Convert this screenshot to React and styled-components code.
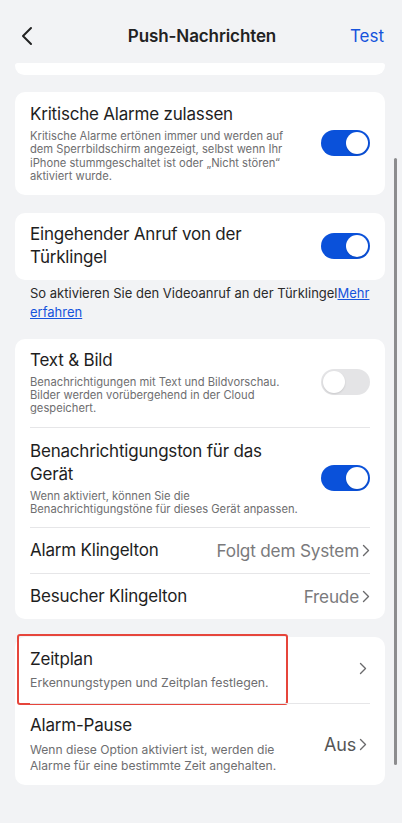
import React from 'react';
import styled, { createGlobalStyle } from 'styled-components';

const GlobalStyle = createGlobalStyle`
  html, body {
    margin: 0;
    padding: 0;
    background: #f2f3f5;
  }
  body {
    font-family: Inter, "Noto Sans", "Liberation Sans", sans-serif;
    -webkit-font-smoothing: antialiased;
  }
`;

const Page = styled.div`
  position: relative;
  width: 402px;
  min-height: 823px;
  background: #f2f3f5;
  overflow: hidden;
`;

const Header = styled.div`
  display: grid;
  grid-template-columns: 1fr auto 1fr;
  align-items: center;
  height: 55px;
  padding: 8px 18px 0 20px;
`;

const BackButton = styled.div`
  display: flex;
  align-items: center;
  color: #222;
`;

const Title = styled.div`
  font-size: 17px;
  font-weight: 600;
  color: #222;
  letter-spacing: -0.1px;
`;

const HeaderAction = styled.div`
  justify-self: end;
  font-size: 17px;
  color: #1553dc;
`;

const Content = styled.div`
  display: flex;
  flex-direction: column;
  padding: 0 17px 0 15px;
`;

const CardStub = styled.div`
  height: 12px;
  background: #fff;
  border-radius: 3px 3px 10px 10px;
  margin-bottom: 17px;
`;

const Card = styled.div`
  background: #fff;
  border-radius: 10px;
  padding: 0 15px;
  margin-bottom: ${p => p.$mb ?? 18}px;
`;

const Row = styled.div`
  position: relative;
  display: flex;
  align-items: center;
  gap: 12px;
  padding: ${p => p.$pad || '11px 0'};
  min-height: ${p => p.$min || 0}px;
  box-sizing: border-box;
  border-top: ${p => (p.$divider ? '1px solid #e6e6e8' : 'none')};
`;

const RowText = styled.div`
  flex: 1;
  min-width: 0;
`;

const RowTitle = styled.div`
  font-size: 17px;
  line-height: 23px;
  color: #1e1e1e;
  letter-spacing: -0.2px;
`;

const RowDesc = styled.div`
  margin-top: ${p => p.$gap ?? 4}px;
  font-size: ${p => p.$size || 11.2}px;
  line-height: ${p => p.$lh || 13.4}px;
  color: #6e6e70;
  max-width: ${p => p.$maxw || 264}px;
`;

const Value = styled.div`
  display: flex;
  align-items: center;
  gap: 3px;
  font-size: ${p => p.$big ? 18 : 17.2}px;
  color: ${p => p.$big ? '#555' : '#7a7a7c'};
  letter-spacing: -0.2px;
  white-space: nowrap;
`;

const Track = styled.div`
  flex: none;
  width: 49px;
  height: 26px;
  border-radius: 13px;
  background: ${p => (p.$on ? '#0a51da' : '#e4e4e6')};
  display: flex;
  align-items: center;
  justify-content: ${p => (p.$on ? 'flex-end' : 'flex-start')};
  padding: 0 2px;
  box-sizing: border-box;
`;

const Knob = styled.div`
  width: 22px;
  height: 22px;
  border-radius: 50%;
  background: #fff;
  box-shadow: 0 1px 2px rgba(0, 0, 0, 0.12);
`;

const Note = styled.div`
  padding: 4px 0 0 15px;
  margin-bottom: 17px;
  font-size: 13px;
  line-height: 19px;
  color: #2a2a2a;
`;

const NoteLink = styled.a`
  color: #1553dc;
  text-decoration: underline;
`;

const Highlight = styled.div`
  position: absolute;
  left: -13px;
  top: -3px;
  width: 271px;
  height: 71px;
  border: 2px solid #e6453b;
  border-radius: 3px;
  box-sizing: border-box;
  pointer-events: none;
`;

const Scrollbar = styled.div`
  position: absolute;
  right: 5px;
  top: 158px;
  width: 3px;
  height: 607px;
  border-radius: 2px;
  background: #8c8c8e;
`;

function Toggle({ on }) {
  return (
    <Track $on={on}>
      <Knob />
    </Track>
  );
}

function Chevron() {
  return (
    <svg width="8" height="13" viewBox="0 0 8 13" fill="none">
      <path d="M1.5 1.5 L6.5 6.5 L1.5 11.5" stroke="#6a6a6c" strokeWidth="1.4" strokeLinecap="round" strokeLinejoin="round" />
    </svg>
  );
}

export default function App() {
  return (
    <Page>
      <GlobalStyle />
      <Header>
        <BackButton>
          <svg width="14" height="20" viewBox="0 0 14 20" fill="none">
            <path d="M11 2 L3 10 L11 18" stroke="#222" strokeWidth="2" strokeLinecap="round" strokeLinejoin="round" />
          </svg>
        </BackButton>
        <Title>Push-Nachrichten</Title>
        <HeaderAction>Test</HeaderAction>
      </Header>

      <Content>
        <CardStub />

        <Card>
          <Row $pad="11px 0 11px">
            <RowText>
              <RowTitle>Kritische Alarme zulassen</RowTitle>
              <RowDesc>
                Kritische Alarme ertönen immer und werden auf dem Sperrbildschirm angezeigt, selbst wenn Ihr iPhone stummgeschaltet ist oder „Nicht stören“ aktiviert wurde.
              </RowDesc>
            </RowText>
            <Toggle on />
          </Row>
        </Card>

        <Card $mb={0}>
          <Row $pad="10px 0 11px">
            <RowText>
              <RowTitle>Eingehender Anruf von der<br />Türklingel</RowTitle>
            </RowText>
            <Toggle on />
          </Row>
        </Card>
        <Note>
          So aktivieren Sie den Videoanruf an der Türklingel<NoteLink href="#">Mehr</NoteLink>{' '}
          <NoteLink href="#">erfahren</NoteLink>
        </Note>

        <Card>
          <Row $pad="10px 0 11px">
            <RowText>
              <RowTitle>Text &amp; Bild</RowTitle>
              <RowDesc>
                Benachrichtigungen mit Text und Bildvorschau. Bilder werden vorübergehend in der Cloud gespeichert.
              </RowDesc>
            </RowText>
            <Toggle />
          </Row>
          <Row $divider $pad="12px 0 10px">
            <RowText>
              <RowTitle>Benachrichtigungston für das<br />Gerät</RowTitle>
              <RowDesc $maxw={290}>
                Wenn aktiviert, können Sie die Benachrichtigungstöne für dieses Gerät anpassen.
              </RowDesc>
            </RowText>
            <Toggle on />
          </Row>
          <Row $divider $pad="0" $min={46}>
            <RowText>
              <RowTitle>Alarm Klingelton</RowTitle>
            </RowText>
            <Value>Folgt dem System <Chevron /></Value>
          </Row>
          <Row $divider $pad="0" $min={46}>
            <RowText>
              <RowTitle>Besucher Klingelton</RowTitle>
            </RowText>
            <Value>Freude <Chevron /></Value>
          </Row>
        </Card>

        <Card>
          <Row $pad="11px 3px 13px 0">
            <RowText>
              <RowTitle>Zeitplan</RowTitle>
              <RowDesc $gap={5} $size={12.3} $lh={14} $maxw={280}>
                Erkennungstypen und Zeitplan festlegen.
              </RowDesc>
            </RowText>
            <Chevron />
            <Highlight />
          </Row>
          <Row $divider $pad="10px 3px 10px 0">
            <RowText>
              <RowTitle>Alarm-Pause</RowTitle>
              <RowDesc $gap={5} $size={12.1} $lh={16.6} $maxw={270}>
                Wenn diese Option aktiviert ist, werden die Alarme für eine bestimmte Zeit angehalten.
              </RowDesc>
            </RowText>
            <Value $big>Aus <Chevron /></Value>
          </Row>
        </Card>
      </Content>

      <Scrollbar />
    </Page>
  );
}
